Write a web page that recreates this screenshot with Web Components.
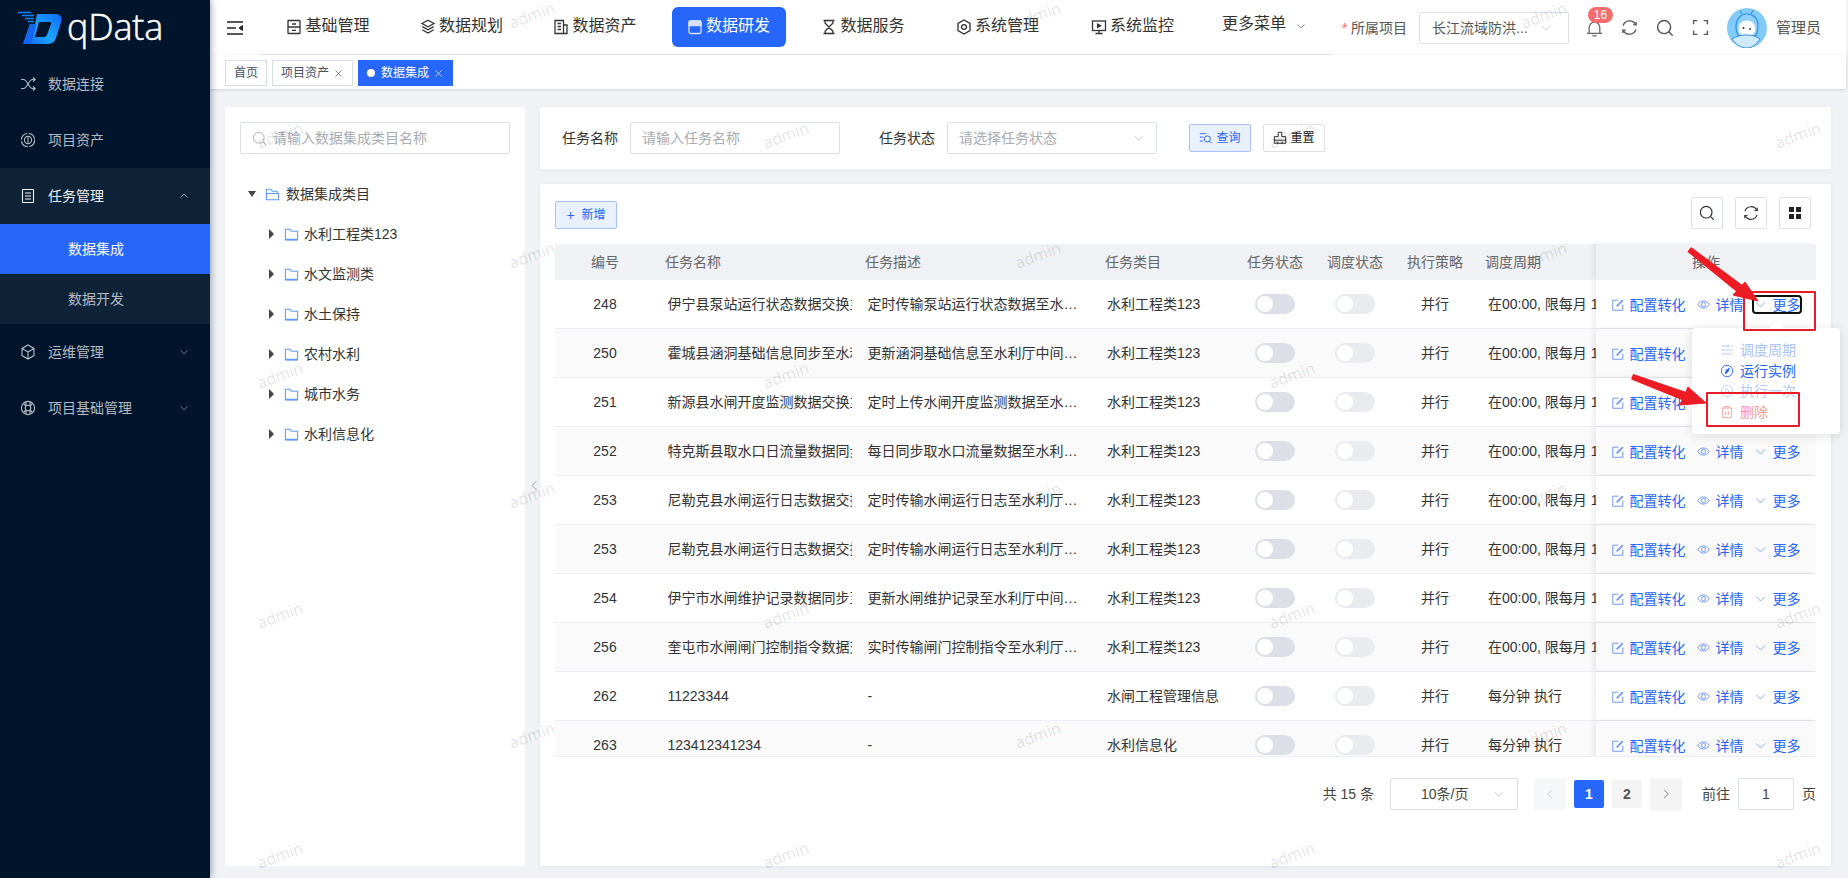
<!DOCTYPE html>
<html lang="zh-CN">
<head>
<meta charset="utf-8">
<title>qData</title>
<style>
	html, body { margin: 0; height: 100%; overflow: hidden; }
	body { font: 14px/20px "Liberation Sans", "Noto Sans CJK SC", sans-serif; color: #333; background: #f0f2f6; }
</style>
</head>
<body>
<q-app></q-app>
<script>
const ICONS = {
	shuffle: '<path d="M1 3.5h2.5c4 0 5 9 9 9H15M1 12.5h2.5c4 0 5-9 9-9H15"/><path d="M13 1.5l2.2 2-2.2 2M13 10.5l2.2 2-2.2 2"/>',
	coin: '<circle cx="8" cy="8" r="6.6" stroke-dasharray="9 1.5"/><circle cx="8" cy="8" r="3.6"/><path d="M8 5.5v5"/>',
	list: '<rect x="2.5" y="1.5" width="11" height="13" rx=".5"/><path d="M5 5h6M5 8h6M5 11h6"/>',
	cube: '<path d="M8 1l6 3.4v7.2L8 15l-6-3.4V4.4zM2 4.4L8 8l6-3.6M8 8v7"/>',
	buoy: '<circle cx="8" cy="8" r="6.6"/><circle cx="8" cy="8" r="2.8"/><path d="M3.4 3.4l2.6 2.6M12.6 3.4L10 6M3.4 12.6L6 10M12.6 12.6L10 10M6 1.7v3.8M10 1.7v3.8M6 10.5v3.8M10 10.5v3.8"/>',
	base: '<rect x="2" y="1.5" width="12" height="13" rx=".5"/><path d="M2 8h12M6 5h4M6 11.3h4"/>',
	win: '<rect x="2" y="2" width="12" height="12.500" rx="1.500"/><path d="M2 6.500V3.500Q2 2 3.500 2h9Q14 2 14 3.500v3z" fill="currentColor"/>',
	layers: '<path d="M8 1.2l6 3.3-6 3.3-6-3.3zM2.3 7.6L8 10.8l5.7-3.2M2.3 10.7L8 14l5.7-3.3"/>',
	asset: '<path d="M2 14.5v-13h8.5v13zM10.5 6H14v8.5H2M4.5 4.5h3.5M4.5 7.5h3.5M4.5 10.5h3.5"/>',
	hourglass: '<path d="M2.5 1.5h11M2.5 14.5h11M4 1.5v2.4L11.8 12v2.5M12 1.5v2.4L4.2 12v2.5"/>',
	hexagon: '<path d="M8 1l6 3.4v7.2L8 15l-6-3.4V4.4z"/><circle cx="8" cy="8" r="2.4"/>',
	monitor: '<rect x="1.5" y="2" width="13" height="9.5"/><path d="M8 11.5v3M4.5 14.5h7"/><path d="M6.6 5l3 1.7-3 1.7z" fill="currentColor"/>',
	bell: '<path d="M3 12.5V7a5 5 0 0 1 10 0v5.500M1 12.500h14M6 15h4"/>',
	refresh: '<path d="M13.800 5.500A6.300 6.300 0 0 0 2 6.200M2.200 10.500a6.300 6.300 0 0 0 11.800-.700"/><path d="M11.500 5.500h2.700V2.800M4.500 10.500H1.800v2.700"/>',
	search: '<circle cx="7.200" cy="7.200" r="5.800"/><path d="M11.600 11.600l3.200 3.200"/>',
	full: '<path d="M1.500 5V1.500H5M11 1.500h3.500V5M14.500 11v3.500H11M5 14.500H1.500V11"/>',
	edit: '<path d="M8.500 2.500H2v11.500h11.500V7.500"/><path d="M6.500 9.500l7-7" stroke-width="2"/>',
	eye: '<path d="M1 8s2.600-4.500 7-4.500S15 8 15 8s-2.600 4.500-7 4.500S1 8 1 8z"/><circle cx="8" cy="8" r="2.500"/>',
	down: '<path d="M2.500 5.500L8 11l5.500-5.500"/>',
	up: '<path d="M2.500 10.500L8 5l5.500 5.500"/>',
	left: '<path d="M10.500 2.500L5 8l5.500 5.500"/>',
	right: '<path d="M5.500 2.500L11 8l-5.500 5.500"/>',
	close: '<path d="M2.500 2.500l11 11M13.500 2.500l-11 11"/>',
	folder: '<path d="M1.500 13.500V2.500h4.800l1.600 2h6.600v9z"/><path d="M1.500 13.500h13" stroke-width="1.800"/>',
	open: '<path d="M1.500 13.500V2.500h4.800l1.600 2h5.100v2.500"/><path d="M1.500 13.500V7h13v6.500z"/>',
	trash: '<path d="M1.500 3.500h13M5.500 3.500v-2h5v2M3 3.500v11h10v-11M6.500 7v4.500M9.500 7v4.500"/>',
	compass: '<circle cx="8" cy="8" r="6.500"/><path d="M10.800 4.800L9 9 6.200 11.200 7 7z" fill="currentColor"/>',
	sliders: '<path d="M1.500 3.500h8M12.500 3.500h2M1.500 8h2M6.500 8h8M1.500 12.500h8M12.500 12.500h2"/><path d="M9.500 2v3M4.500 6.500v3M10.500 11v3"/>',
	play: '<circle cx="8" cy="8" r="6.500"/><path d="M6.500 5l4 3-4 3z"/>',
	query: '<path d="M1 3h7M1 7h3.500M1 11.500h3.500"/><circle cx="9.500" cy="9" r="3.500"/><path d="M12 11.500l2.500 2.500"/>',
	broom: '<path d="M6 1.500h4v5h4.500v7.500h-13V6.500H6zM1.500 10.500h13M5.500 14v-2M10.500 14v-2"/>'
};

class QIcon extends HTMLElement {
	constructor() {
		super();
		const size = this.getAttribute('size') || 16;
		const sw = this.getAttribute('sw') || 1.3;
		const shadowRoot = this.attachShadow({ mode: 'open' });
		shadowRoot.innerHTML = `
			<style>
				:host { display: inline-flex; flex: none; width: ${size}px; height: ${size}px; }
				svg { width: 100%; height: 100%; display: block; fill: none; stroke: currentColor; stroke-width: ${sw}; }
			</style>
			<svg viewBox="0 0 16 16">${ICONS[this.getAttribute('name')] || ''}</svg>
		`;
	}
}
customElements.define('q-icon', QIcon);

class QLogo extends HTMLElement {
	constructor() {
		super();
		const shadowRoot = this.attachShadow({ mode: 'open' });
		shadowRoot.innerHTML = `
			<style>
				:host { display: flex; align-items: center; height: 56px; padding-left: 17px; gap: 5px; box-sizing: border-box; }
				svg { width: 45px; height: 34px; flex: none; margin-top: -1px; }
				span { font: 300 36px/40px "Open Sans", sans-serif; color: #fff; letter-spacing: -.2px; -webkit-text-stroke: .5px #fff; margin-top: -2px; }
			</style>
			<svg viewBox="0 0 45 34">
				<defs>
					<linearGradient id="g" x1="0" y1="1" x2="1" y2="0">
						<stop offset="0" stop-color="#0d5ff0"/><stop offset=".45" stop-color="#1fa6ff"/><stop offset="1" stop-color="#0e6bff"/>
					</linearGradient>
				</defs>
				<path fill="url(#g)" fill-rule="evenodd" d="M20 3H38Q46 3 44 11L39 27Q37 33 30 33H6L13 13H18zM22 11H33Q34.500 11 34 13L30 24Q29 26 27 26H18z"/>
				<path fill="#1466f0" d="M13 13h6.500L14 33H6z"/>
				<path fill="none" stroke="#1682ff" stroke-width="1.600" d="M1 1.500h13M5 4.500h12M8 7.500h9M11 10.500h6"/>
			</svg>
			<span>qData</span>
		`;
	}
}
customElements.define('q-logo', QLogo);

class QMenuItem extends HTMLElement {
	constructor() {
		super();
		const arrow = this.getAttribute('arrow');
		const icon = this.getAttribute('icon');
		const shadowRoot = this.attachShadow({ mode: 'open' });
		shadowRoot.innerHTML = `
			<style>
				:host { display: flex; align-items: center; height: 56px; padding-left: 20px; color: #b4bac3; font-size: 14px; position: relative; }
				:host([open]) { background: #0f2338; color: #eef0f2; }
				:host([sub]) { height: 50px; padding-left: 68px; background: #0f2338; }
				:host([active]) { background: #2666fb; color: #fff; }
				.label { margin-left: 12px; }
				:host([sub]) .label { margin-left: 0; }
				.arrow { position: absolute; left: 179px; top: 50%; margin-top: -5px; }
			</style>
			${icon ? `<q-icon name="${icon}" size="16" sw="1.100"></q-icon>` : ''}
			<span class="label"><slot></slot></span>
			${arrow ? `<q-icon class="arrow" name="${arrow}" size="10" sw="1"></q-icon>` : ''}
		`;
	}
}
customElements.define('q-menu-item', QMenuItem);

class QSidebar extends HTMLElement {
	constructor() {
		super();
		const shadowRoot = this.attachShadow({ mode: 'open' });
		shadowRoot.innerHTML = `
			<style>
				:host { display: block; width: 210px; flex: none; background: #00152b; box-shadow: 2px 0 6px rgba(0, 21, 41, .3); position: relative; z-index: 3; }
			</style>
			<q-logo></q-logo>
			<q-menu-item icon="shuffle">数据连接</q-menu-item>
			<q-menu-item icon="coin">项目资产</q-menu-item>
			<q-menu-item icon="list" arrow="up" open>任务管理</q-menu-item>
			<q-menu-item sub active>数据集成</q-menu-item>
			<q-menu-item sub>数据开发</q-menu-item>
			<q-menu-item icon="cube" arrow="down">运维管理</q-menu-item>
			<q-menu-item icon="buoy" arrow="down">项目基础管理</q-menu-item>
		`;
	}
}
customElements.define('q-sidebar', QSidebar);

class QNavItem extends HTMLElement {
	constructor() {
		super();
		const shadowRoot = this.attachShadow({ mode: 'open' });
		shadowRoot.innerHTML = `
			<style>
				:host { display: flex; align-items: center; justify-content: center; gap: 3px; width: 114px; height: 40px; font-size: 16px; color: #333; border-radius: 6px; flex: none; }
				:host([active]) { background: #2666fb; color: #fff; }
				span { margin-top: -3px; }
				q-icon { margin-top: -1px; }
				:host([active]) q-icon { color: #d5e1ff; }
			</style>
			<q-icon name="${this.getAttribute('icon')}" size="16" sw="1.300"></q-icon>
			<span><slot></slot></span>
		`;
	}
}
customElements.define('q-nav-item', QNavItem);

class QHeader extends HTMLElement {
	constructor() {
		super();
		const shadowRoot = this.attachShadow({ mode: 'open' });
		shadowRoot.innerHTML = `
			<style>
				:host { display: flex; align-items: center; height: 55px; background: #fff; flex: none; margin-right: 2px; }
				.toggle { margin-left: 17px; width: 16px; height: 16px; color: #222; flex: none; }
				nav { display: flex; align-items: center; gap: 19.500px; margin-left: 17px; padding-left: 11px; height: 55px; border-bottom: 1px solid #e4e6ea; box-sizing: border-box; width: 1072px; flex: none; }
				.more { display: flex; align-items: center; margin-left: 13px; font-size: 16px; gap: 10px; margin-top: -6px; white-space: nowrap; }
				.more q-icon { color: #555; margin-top: 3px; }
				.right { display: flex; align-items: center; margin-left: 10px; height: 55px; white-space: nowrap; }
				.req { color: #f56c6c; font-size: 14px; width: 9px; }
				.proj { width: 68px; color: #555; }
				.select { display: flex; align-items: center; box-sizing: border-box; width: 150px; height: 32px; border: 1px solid #dcdfe6; border-radius: 2px; padding-left: 12px; color: #555; }
				.select b { font-weight: 400; width: 101px; }
				.select q-icon { color: #bbb; margin-left: 7px; }
				.bell { position: relative; margin-left: 17px; color: #666; width: 17px; height: 17px; margin-top: 2px; }
				.badge { position: absolute; left: 2px; top: -13px; width: 25px; height: 16px; border-radius: 8px; background: #f56c6c; color: #fff; font-size: 12px; line-height: 16px; text-align: center; }
				.ic { color: #555; margin-left: 18px; }
				.avatar { margin-left: 18px; width: 40px; height: 40px; flex: none; }
				.name { margin-left: 9px; font-size: 15px; color: #555; }
			</style>
			<svg class="toggle" viewBox="0 0 16 16" fill="none" stroke="currentColor" stroke-width="1.500"><path d="M0 2h16M0 8h9M0 14h16"/><path d="M15.500 5.500L12 8l3.500 2.500z" fill="currentColor" stroke-width="1"/></svg>
			<nav>
				<q-nav-item icon="base">基础管理</q-nav-item>
				<q-nav-item icon="layers">数据规划</q-nav-item>
				<q-nav-item icon="asset">数据资产</q-nav-item>
				<q-nav-item icon="win" active>数据研发</q-nav-item>
				<q-nav-item icon="hourglass" style="margin-left:1px">数据服务</q-nav-item>
				<q-nav-item icon="hexagon" style="margin-left:1px">系统管理</q-nav-item>
				<q-nav-item icon="monitor" style="margin-left:1.500px">系统监控</q-nav-item>
				<div class="more">更多菜单<q-icon name="down" size="10" sw="1.200"></q-icon></div>
			</nav>
			<div class="right">
				<span class="req">*</span>
				<span class="proj">所属项目</span>
				<div class="select"><b>长江流域防洪...</b><q-icon name="down" size="12" sw="1"></q-icon></div>
				<div class="bell"><q-icon name="bell" size="17" sw="1.200"></q-icon><span class="badge">16</span></div>
				<q-icon class="ic" name="refresh" size="17" sw="1.300"></q-icon>
				<q-icon class="ic" name="search" size="18" sw="1.300"></q-icon>
				<q-icon class="ic" name="full" size="17" sw="1.300"></q-icon>
				<svg class="avatar" viewBox="0 0 40 40">
					<circle cx="20" cy="20" r="20" fill="#82cbf9"/>
					<path d="M15 6l-2-3M24 6l2-3.500" stroke="#2f8fe6" stroke-width="1.200" fill="none"/>
					<path d="M9 19c0-8 5-13 11-13s11 4 11 12c0 5-1 8-3 10H12c-2-2-3-5-3-9z" fill="#8fd0fa" stroke="#2f8fe6" stroke-width="1.200"/>
					<ellipse cx="20" cy="20.500" rx="8.500" ry="8" fill="#fff"/>
					<circle cx="16.500" cy="20" r="1" fill="#333"/><circle cx="23" cy="21" r="1" fill="#333"/>
					<path d="M5 31c4-3 9-4 15-4 5 0 9 1 13 4-3 5-8 9-13 9-6 0-12-4-15-9z" fill="#cfe9fd" stroke="#2f8fe6" stroke-width="1"/>
				</svg>
				<span class="name">管理员</span>
			</div>
		`;
	}
}
customElements.define('q-header', QHeader);

class QTag extends HTMLElement {
	constructor() {
		super();
		const shadowRoot = this.attachShadow({ mode: 'open' });
		shadowRoot.innerHTML = `
			<style>
				:host { display: inline-flex; align-items: center; box-sizing: border-box; height: 26px; padding: 0 8px; border: 1px solid #d8dce5; font-size: 12px; color: #495060; background: #fff; }
				:host([active]) { background: #2666fb; border-color: #2666fb; color: #fff; }
				.dot { display: none; width: 8px; height: 8px; border-radius: 50%; background: #fff; margin-right: 6px; }
				:host([active]) .dot { display: block; }
				q-icon { margin: 1px 1px 0 5px; }
			</style>
			<span class="dot"></span>
			<slot></slot>
			${this.hasAttribute('closable') ? '<q-icon name="close" size="9" sw="1.200"></q-icon>' : ''}
		`;
	}
}
customElements.define('q-tag', QTag);

class QTags extends HTMLElement {
	constructor() {
		super();
		const shadowRoot = this.attachShadow({ mode: 'open' });
		shadowRoot.innerHTML = `
			<style>
				:host { display: flex; align-items: flex-start; gap: 5px; height: 34px; box-sizing: border-box; padding: 5px 0 0 15px; background: #fff; flex: none; margin-right: 2px; box-shadow: 0 1px 3px rgba(0, 0, 0, .14); position: relative; }
			</style>
			<q-tag>首页</q-tag>
			<q-tag closable>项目资产</q-tag>
			<q-tag closable active>数据集成</q-tag>
		`;
	}
}
customElements.define('q-tags', QTags);

class QInput extends HTMLElement {
	constructor() {
		super();
		const shadowRoot = this.attachShadow({ mode: 'open' });
		shadowRoot.innerHTML = `
			<style>
				:host { display: flex; align-items: center; box-sizing: border-box; height: 32px; border: 1px solid #dcdfe6; border-radius: 2px; padding: 0 11px; color: #a8abb2; font-size: 14px; background: #fff; }
				.grow { flex: 1; white-space: nowrap; }
			</style>
			<slot name="prefix"></slot>
			<span class="grow"><slot></slot></span>
			<slot name="suffix"></slot>
		`;
	}
}
customElements.define('q-input', QInput);

class QButton extends HTMLElement {
	constructor() {
		super();
		const icon = this.getAttribute('icon');
		const shadowRoot = this.attachShadow({ mode: 'open' });
		shadowRoot.innerHTML = `
			<style>
				:host { display: inline-flex; align-items: center; justify-content: center; gap: 3px; box-sizing: border-box; height: 28px; border: 1px solid #dcdfe6; border-radius: 2px; background: #fff; color: #222; font-size: 12px; }
				:host([primary]) { background: #e9f0ff; border-color: #a8c1fd; color: #2666fb; }
			</style>
			${icon ? `<q-icon name="${icon}" size="14" sw="1.100"></q-icon>` : ''}
			<slot></slot>
		`;
	}
}
customElements.define('q-button', QButton);

class QTree extends HTMLElement {
	constructor() {
		super();
		const shadowRoot = this.attachShadow({ mode: 'open' });
		const nodes = ['水利工程类123', '水文监测类', '水土保持', '农村水利', '城市水务', '水利信息化'];
		shadowRoot.innerHTML = `
			<style>
				:host { display: block; width: 300px; flex: none; box-sizing: border-box; padding: 15px; background: #fff; border-radius: 2px; }
				.list { margin-top: 20px; }
				.node { display: flex; align-items: center; height: 40px; color: #333; }
				.caret { width: 0; height: 0; flex: none; }
				.root .caret { margin-left: 8px; border-style: solid; border-width: 6px 4.500px 0; border-color: #444 transparent transparent; }
				.child .caret { margin-left: 29px; border-style: solid; border-width: 5.500px 0 5.500px 5.500px; border-color: transparent transparent transparent #444; }
				.node q-icon { color: #5a9cf5; margin-left: 9px; margin-right: 6px; }
				.child q-icon { margin-left: 10px; margin-right: 5px; }
				.find { color: #a8abb2; margin-right: 6px; }
			</style>
			<q-input>
				<q-icon class="find" slot="prefix" name="search" size="15" sw="1"></q-icon>
				请输入数据集成类目名称
			</q-input>
			<div class="list">
				<div class="node root"><span class="caret"></span><q-icon name="open" size="15" sw="1.100"></q-icon>数据集成类目</div>
				${nodes.map(n => `<div class="node child"><span class="caret"></span><q-icon name="folder" size="15" sw="1.100"></q-icon>${n}</div>`).join('')}
			</div>
		`;
	}
}
customElements.define('q-tree', QTree);

class QSearch extends HTMLElement {
	constructor() {
		super();
		const shadowRoot = this.attachShadow({ mode: 'open' });
		shadowRoot.innerHTML = `
			<style>
				:host { display: flex; align-items: center; height: 62px; padding-left: 22px; background: #fff; border-radius: 2px; box-shadow: 0 2px 6px rgba(0, 0, 0, .04); flex: none; color: #333; }
				.l2 { margin-left: 39px; }
				q-input { width: 210px; margin-left: 12px; }
				q-input q-icon { color: #bbb; }
				q-button { width: 62px; }
			</style>
			<span>任务名称</span>
			<q-input>请输入任务名称</q-input>
			<span class="l2">任务状态</span>
			<q-input>请选择任务状态<q-icon slot="suffix" name="down" size="12" sw="1"></q-icon></q-input>
			<q-button primary icon="query" style="margin-left:32px">查询</q-button>
			<q-button icon="broom" style="margin-left:12px">重置</q-button>
		`;
	}
}
customElements.define('q-search', QSearch);

class QSwitch extends HTMLElement {
	constructor() {
		super();
		const shadowRoot = this.attachShadow({ mode: 'open' });
		shadowRoot.innerHTML = `
			<style>
				:host { display: block; position: relative; width: 40px; height: 20px; border-radius: 10px; background: #dcdfe6; }
				:host([disabled]) { background: #e9ebef; }
				i { position: absolute; left: 2px; top: 2px; width: 16px; height: 16px; border-radius: 50%; background: #fff; }
			</style>
			<i></i>
		`;
	}
}
customElements.define('q-switch', QSwitch);

const ROWS = [
	['248', '伊宁县泵站运行状态数据交换主题', '定时传输泵站运行状态数据至水利厅中间库', '水利工程类123', '在00:00, 限每月 1号 执行'],
	['250', '霍城县涵洞基础信息同步至水利厅', '更新涵洞基础信息至水利厅中间库数据表', '水利工程类123', '在00:00, 限每月 1号 执行'],
	['251', '新源县水闸开度监测数据交换主题', '定时上传水闸开度监测数据至水利厅中间库', '水利工程类123', '在00:00, 限每月 1号 执行'],
	['252', '特克斯县取水口日流量数据同步至', '每日同步取水口流量数据至水利厅中间库表', '水利工程类123', '在00:00, 限每月 1号 执行'],
	['253', '尼勒克县水闸运行日志数据交换主', '定时传输水闸运行日志至水利厅中间库数据', '水利工程类123', '在00:00, 限每月 1号 执行'],
	['253', '尼勒克县水闸运行日志数据交换主', '定时传输水闸运行日志至水利厅中间库数据', '水利工程类123', '在00:00, 限每月 1号 执行'],
	['254', '伊宁市水闸维护记录数据同步至水', '更新水闸维护记录至水利厅中间库数据表', '水利工程类123', '在00:00, 限每月 1号 执行'],
	['256', '奎屯市水闸闸门控制指令数据交换', '实时传输闸门控制指令至水利厅中间库数据', '水利工程类123', '在00:00, 限每月 1号 执行'],
	['262', '11223344', '-', '水闸工程管理信息', '每分钟 执行'],
	['263', '123412341234', '-', '水利信息化', '每分钟 执行']
];

class QTable extends HTMLElement {
	constructor() {
		super();
		const shadowRoot = this.attachShadow({ mode: 'open' });
		const row = (r, i) => `
			<div class="row${i % 2 ? ' even' : ''}">
				<div class="c">${r[0]}</div>
				<div class="name"><span>${r[1]}</span></div>
				<div class="desc"><span>${r[2]}</span></div>
				<div class="cat">${r[3]}</div>
				<div class="c"><q-switch></q-switch></div>
				<div class="c"><q-switch disabled></q-switch></div>
				<div class="c">并行</div>
				<div class="period">${r[4]}</div>
				<div class="ops">
					<q-icon name="edit" size="14" sw="1.100"></q-icon><a style="margin-left:5px">配置转化</a>
					<q-icon name="eye" size="13" sw="1.200" style="margin-left:11px"></q-icon><a style="margin-left:6px">详情</a>
					<span class="more${i === 0 ? ' focus' : ''}"><q-icon name="down" size="13" sw="1"></q-icon><a>更多</a></span>
				</div>
			</div>`;
		shadowRoot.innerHTML = `
			<style>
				:host { display: block; }
				.row, .head { display: grid; grid-template-columns: 100px 200px 240px 140px 80px 80px 80px 121px 220px; }
				.head { height: 36px; background: #f0f1f5; color: #666; align-items: center; }
				.head > div { padding-left: 10px; }
				.head .c { padding-left: 0; text-align: center; }
				.head .op { height: 36px; line-height: 36px; background: #f0f1f5; box-shadow: -3px 0 5px rgba(0, 0, 0, .07); position: relative; }
				.body { height: 477px; overflow: hidden; border-bottom: 1px solid #ebeef5; box-sizing: border-box; }
				.row { height: 49px; box-sizing: border-box; border-bottom: 1px solid #ebeef5; align-items: center; background: #fff; }
				.row.even, .row.even .ops { background: #fafafa; }
				.c { display: flex; justify-content: center; align-items: center; }
				.name { padding-left: 12.500px; padding-right: 3px; overflow: hidden; white-space: nowrap; }
				.name span { display: block; overflow: hidden; }
				.desc { padding-left: 12.500px; padding-right: 16px; overflow: hidden; white-space: nowrap; }
				.desc span { display: block; overflow: hidden; text-overflow: ellipsis; }
				.cat { padding-left: 12px; white-space: nowrap; }
				.period { padding-left: 13px; white-space: nowrap; overflow: hidden; }
				.ops { display: flex; align-items: center; height: 100%; box-sizing: border-box; padding: 1px 0 0 14.500px; background: #fff; color: #2666fb; box-shadow: -3px 0 5px rgba(0, 0, 0, .07); position: relative; white-space: nowrap; }
				.ops q-icon { color: #6f96f7; }
				.more { display: inline-flex; align-items: center; width: 50px; height: 19px; box-sizing: border-box; border: 2px solid transparent; border-radius: 4px; margin-left: 8px; }
				.more.focus { border-color: #111; }
				.more a { margin-left: 6px; }
			</style>
			<div class="head">
				<div class="c">编号</div><div>任务名称</div><div>任务描述</div><div>任务类目</div>
				<div class="c">任务状态</div><div class="c">调度状态</div><div class="c">执行策略</div><div>调度周期</div>
				<div class="c op">操作</div>
			</div>
			<div class="body">${ROWS.map(row).join('')}</div>
		`;
	}
}
customElements.define('q-table', QTable);

class QPager extends HTMLElement {
	constructor() {
		super();
		const shadowRoot = this.attachShadow({ mode: 'open' });
		shadowRoot.innerHTML = `
			<style>
				:host { display: flex; align-items: center; justify-content: flex-end; height: 32px; margin-top: 21px; color: #444; }
				.box { display: flex; align-items: center; box-sizing: border-box; height: 32px; border: 1px solid #dcdfe6; border-radius: 2px; }
				.size { width: 128px; margin-left: 16px; padding-left: 30px; }
				.size q-icon { color: #bbb; margin-left: 25px; }
				.nav { display: flex; align-items: center; justify-content: center; width: 32px; height: 32px; background: #f4f4f5; border-radius: 2px; color: #555; }
				.nav.off { background: #f6f7f9; color: #bbb; margin-left: 16px; }
				.pg { display: flex; align-items: center; justify-content: center; width: 30px; height: 28px; background: #f4f4f5; border-radius: 2px; font-weight: 700; color: #555; }
				.pg.on { background: #2666fb; color: #fff; }
				.goto { width: 56px; justify-content: center; margin: 0 8px; }
			</style>
			<span>共 15 条</span>
			<div class="box size">10条/页<q-icon name="down" size="12" sw="1"></q-icon></div>
			<div class="nav off"><q-icon name="left" size="12" sw="1"></q-icon></div>
			<div class="pg on" style="margin-left:8px">1</div>
			<div class="pg" style="margin-left:8px">2</div>
			<div class="nav" style="margin-left:8px"><q-icon name="right" size="12" sw="1"></q-icon></div>
			<span style="margin-left:20px">前往</span>
			<div class="box goto">1</div>
			<span>页</span>
		`;
	}
}
customElements.define('q-pager', QPager);

class QPanel extends HTMLElement {
	constructor() {
		super();
		const shadowRoot = this.attachShadow({ mode: 'open' });
		shadowRoot.innerHTML = `
			<style>
				:host { display: block; flex: 1; box-sizing: border-box; padding: 13px 15px 0; background: #fff; border-radius: 2px; box-shadow: 0 1px 4px rgba(0, 0, 0, .06); }
				.bar { display: flex; align-items: flex-end; height: 32px; margin-bottom: 15px; padding-right: 5px; }
				.bar q-button { width: 62px; color: #2666fb; }
				.tools { display: flex; gap: 12px; margin-left: auto; }
				.tool { display: flex; align-items: center; justify-content: center; box-sizing: border-box; width: 32px; height: 32px; border: 1px solid #dcdfe6; border-radius: 2px; color: #333; }
				.grid { display: grid; grid-template-columns: 5px 5px; gap: 2px; }
				.grid i { width: 5px; height: 5px; background: #222; }
			</style>
			<div class="bar">
				<q-button primary><span style="font-size:14px;margin-right:4px">+</span>新增</q-button>
				<div class="tools">
					<div class="tool"><q-icon name="search" size="16" sw="1.200"></q-icon></div>
					<div class="tool"><q-icon name="refresh" size="16" sw="1.200"></q-icon></div>
					<div class="tool"><div class="grid"><i></i><i></i><i></i><i></i></div></div>
				</div>
			</div>
			<q-table></q-table>
			<q-pager></q-pager>
		`;
	}
}
customElements.define('q-panel', QPanel);

class QDropdown extends HTMLElement {
	constructor() {
		super();
		const shadowRoot = this.attachShadow({ mode: 'open' });
		shadowRoot.innerHTML = `
			<style>
				:host { position: absolute; left: 1692px; top: 328px; width: 148px; height: 106px; box-sizing: border-box; padding: 12px 0 0 28px; background: #fff; border-radius: 4px; box-shadow: 0 2px 12px rgba(0, 0, 0, .12); z-index: 5; }
				:host::before { content: ""; position: absolute; left: 80px; top: -5px; width: 10px; height: 10px; background: #fff; transform: rotate(45deg); }
				.item { display: flex; align-items: center; gap: 6px; height: 20.600px; white-space: nowrap; position: relative; }
				.a { color: #a9c2fd; }
				.b { color: #2666fb; }
				.c { color: #b5c9fd; }
				.d { color: #f89898; }
			</style>
			<div class="item a"><q-icon name="sliders" size="14" sw="1"></q-icon>调度周期</div>
			<div class="item b"><q-icon name="compass" size="14" sw="1"></q-icon>运行实例</div>
			<div class="item c"><q-icon name="play" size="14" sw="1"></q-icon>执行一次</div>
			<div class="item d"><q-icon name="trash" size="14" sw="1"></q-icon>删除</div>
		`;
	}
}
customElements.define('q-dropdown', QDropdown);

// red boxes and arrows drawn on top of the screenshot
class QMarks extends HTMLElement {
	constructor() {
		super();
		const shadowRoot = this.attachShadow({ mode: 'open' });
		shadowRoot.innerHTML = `
			<style>
				:host { position: absolute; left: 0; top: 0; width: 1848px; height: 878px; pointer-events: none; z-index: 6; }
				svg { display: block; }
			</style>
			<svg width="1848" height="878" fill="#ed1c24" stroke="#ed1c24" stroke-linejoin="round">
				<rect x="1744" y="292" width="71" height="38" fill="none" stroke="#e81c24" stroke-width="2"/>
				<rect x="1707" y="393" width="92" height="33" fill="none" stroke="#e81c24" stroke-width="2"/>
				<path stroke-width="2" d="M1688.800 251.600L1691.200 248.400L1741.100 285.200L1736.900 290.800z"/>
				<path stroke-width="1" d="M1758 301L1733 295L1745 282z"/>
				<path stroke-width="2" d="M1632.300 378.900L1633.700 375.100L1685.200 392.700L1682.800 399.300z"/>
				<path stroke-width="1" d="M1706 403L1680 405L1688 387z"/>
			</svg>
		`;
	}
}
customElements.define('q-marks', QMarks);

class QWatermark extends HTMLElement {
	constructor() {
		super();
		const shadowRoot = this.attachShadow({ mode: 'open' });
		const spots = [];
		[15, 255, 495, 735].forEach(y => [532, 1038, 1544].forEach(x => spots.push([x, y])));
		[135, 375, 615, 855].forEach(y => [280, 786, 1292, 1798].forEach(x => spots.push([x, y])));
		shadowRoot.innerHTML = `
			<style>
				:host { position: absolute; left: 0; top: 0; width: 1848px; height: 878px; overflow: hidden; pointer-events: none; z-index: 2; }
				span { position: absolute; width: 60px; margin: -11px 0 0 -30px; text-align: center; font: 16px/22px "Open Sans", sans-serif; color: rgba(0, 0, 0, .13); transform: rotate(-20deg); }
			</style>
			${spots.map(p => `<span style="left:${p[0]}px;top:${p[1]}px">admin</span>`).join('')}
		`;
	}
}
customElements.define('q-watermark', QWatermark);

class QApp extends HTMLElement {
	constructor() {
		super();
		const shadowRoot = this.attachShadow({ mode: 'open' });
		shadowRoot.innerHTML = `
			<style>
				:host { display: flex; position: relative; width: 1848px; height: 878px; overflow: hidden; }
				.main { flex: 1; display: flex; flex-direction: column; min-width: 0; }
				.content { flex: 1; display: flex; gap: 15px; padding: 18px 17px 12px 15px; min-height: 0; position: relative; }
				.col { flex: 1; display: flex; flex-direction: column; gap: 15px; min-width: 0; }
				.fold { position: absolute; left: 318px; top: 390px; color: #888; }
			</style>
			<q-sidebar></q-sidebar>
			<div class="main">
				<q-header></q-header>
				<q-tags></q-tags>
				<div class="content">
					<q-tree></q-tree>
					<div class="col">
						<q-search></q-search>
						<q-panel></q-panel>
					</div>
					<q-icon class="fold" name="left" size="13" sw="1"></q-icon>
				</div>
			</div>
			<q-dropdown></q-dropdown>
			<q-watermark></q-watermark>
			<q-marks></q-marks>
		`;
	}
}
customElements.define('q-app', QApp);
</script>
</body>
</html>
